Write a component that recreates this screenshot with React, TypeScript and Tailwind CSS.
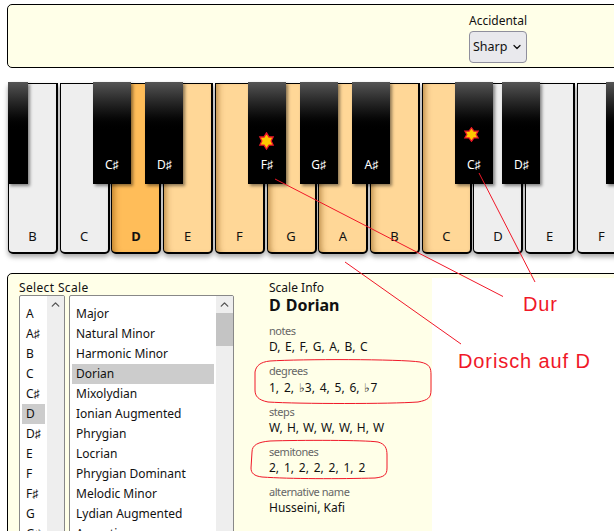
import React from 'react';
import { ChevronDown, ChevronUp } from 'lucide-react';

const whiteKeys = [
  { name: 'B', tone: 'off', black: '-left-[1px] w-[20px]', sharp: '' },
  { name: 'C', tone: 'off', black: 'left-[32px] w-[38px]', sharp: 'C♯' },
  { name: 'D', tone: 'root', black: 'left-[33px] w-[38px]', sharp: 'D♯' },
  { name: 'E', tone: 'on', black: '', sharp: '' },
  { name: 'F', tone: 'on', black: 'left-[32px] w-[38px]', sharp: 'F♯' },
  { name: 'G', tone: 'on', black: 'left-[32px] w-[38px]', sharp: 'G♯' },
  { name: 'A', tone: 'on', black: 'left-[33px] w-[38px]', sharp: 'A♯' },
  { name: 'B', tone: 'on', black: '', sharp: '' },
  { name: 'C', tone: 'on', black: 'left-[32px] w-[38px]', sharp: 'C♯' },
  { name: 'D', tone: 'off', black: 'left-[28px] w-[38px]', sharp: 'D♯' },
  { name: 'E', tone: 'off', black: '', sharp: '' },
  { name: 'F', tone: 'off', black: 'left-[28px] w-[38px]', sharp: '' },
];

const notes = ['A', 'A♯', 'B', 'C', 'C♯', 'D', 'D♯', 'E', 'F', 'F♯', 'G', 'G♯'];
const scales = [
  'Major',
  'Natural Minor',
  'Harmonic Minor',
  'Dorian',
  'Mixolydian',
  'Ionian Augmented',
  'Phrygian',
  'Locrian',
  'Phrygian Dominant',
  'Melodic Minor',
  'Lydian Augmented',
  'Acoustic',
];

const info = [
  { label: 'notes', value: 'D, E, F, G, A, B, C', cls: 'mt-[8px]', spacing: '[word-spacing:1.4px]' },
  { label: 'degrees', value: '1, 2, ♭3, 4, 5, 6, ♭7', cls: 'mt-[8px]', spacing: '[word-spacing:1.7px] pt-[1px]' },
  { label: 'steps', value: 'W, H, W, W, W, H, W', cls: 'mt-[8px]', spacing: '[word-spacing:1px]' },
  { label: 'semitones', value: '2, 1, 2, 2, 2, 1, 2', cls: 'mt-[8px]', spacing: '[word-spacing:1.7px]' },
  { label: 'alternative name', value: 'Husseini, Kafi', cls: 'mt-[8px]', spacing: '' },
];

const Star = ({ size }: { size: string }) => (
  <svg viewBox="0 0 20 20" preserveAspectRatio="none" className={size}>
    <polygon
      points="10,1 12.9,5.5 17.8,5.5 15.5,10 17.8,14.5 12.9,14.5 10,19 7.1,14.5 2.2,14.5 4.5,10 2.2,5.5 7.1,5.5"
      fill="#ffc800"
      stroke="#f01828"
      strokeWidth="1.5"
    />
  </svg>
);

const Key = ({ k, star }: { k: (typeof whiteKeys)[number]; star: string }) => {
  const toneClass =
    k.tone === 'off'
      ? 'bg-[#eeeeee]'
      : k.tone === 'root'
        ? 'bg-[#ffbd59] shadow-[inset_7px_0_6px_-5px_rgba(120,70,0,0.55),0_3px_5px_rgba(0,0,0,0.35)]'
        : 'bg-[#ffd797] shadow-[inset_7px_0_6px_-5px_rgba(120,70,0,0.55),0_3px_5px_rgba(0,0,0,0.35)]';
  return (
    <div
      className={`relative flex h-[171px] w-[50px] shrink-0 items-end justify-center rounded-b-[5px] border-t border-r-2 border-b-2 border-l border-black pb-[7px] text-[13px] leading-[18px] shadow-[0_3px_5px_rgba(0,0,0,0.35)] ${toneClass} ${k.tone === 'root' ? 'font-bold' : ''}`}
    >
      {k.name}
      {k.black && (
        <div
          className={`absolute -top-[2px] z-10 flex h-[102px] flex-col items-center justify-end bg-gradient-to-b from-[#555555] via-[#000000] via-50% to-[#000000] pb-[11px] text-[12px] leading-[16px] font-normal text-white shadow-[2px_2px_3px_rgba(0,0,0,0.45)] ${k.black}`}
        >
          {star === 'large' && (
            <span className="mb-[7px]">
              <Star size="h-[18px] w-[17px]" />
            </span>
          )}
          {star === 'small' && (
            <span className="mb-[15px] -ml-[5px]">
              <Star size="h-[15px] w-[17px]" />
            </span>
          )}
          {k.sharp}
        </div>
      )}
    </div>
  );
};

const ListBox = ({
  items,
  selected,
  width,
  thumb,
}: {
  items: string[];
  selected: string;
  width: string;
  thumb?: boolean;
}) => (
  <div className={`flex h-[300px] shrink-0 overflow-hidden rounded-t-[2px] border border-[#888888] bg-white ${width}`}>
    <div className="min-w-0 flex-1 px-[2px] pt-[8px]">
      {items.map(item => (
        <div
          key={item}
          className={`h-[20px] truncate pl-[4px] leading-[20px] ${item === selected ? 'bg-[#cccccc]' : ''}`}
        >
          {item}
        </div>
      ))}
    </div>
    <div className="w-[17px] shrink-0 bg-[#eeeeee]">
      <div className="flex h-[17px] items-center justify-center text-[#555555]">
        <ChevronUp size={13} strokeWidth={2.5} />
      </div>
      {thumb && <div className="h-[33px] bg-[#c4c4c4]" />}
    </div>
  </div>
);

const App: React.FC = () => {
  return (
    <div className="relative flex h-[531px] w-[614px] flex-col overflow-hidden bg-white pt-[4px] pl-[7px] font-['Noto_Sans',sans-serif] text-[12px] text-[#111111]">
      {/* Options */}
      <div className="h-[64px] w-[640px] shrink-0 rounded-[5px] border border-black bg-[#ffffe8] pt-[7px] pl-[461px]">
        <div className="leading-[18px]">Accidental</div>
        <div className="relative mt-[1px] h-[32px] w-[58px]">
          <select className="h-full w-full appearance-none rounded-[4px] border border-[#8f8f9d] bg-[#e9e9ed] pl-[3px] text-[12.5px] text-[#111111]">
            <option>Sharp</option>
          </select>
          <ChevronDown size={12} strokeWidth={2.5} className="pointer-events-none absolute top-[10px] right-[4px]" />
        </div>
      </div>

      {/* Keyboard */}
      <div className="mt-[15px] ml-[1px] flex h-[171px] w-[640px] shrink-0 gap-[1.72px]">
        {whiteKeys.map((k, i) => (
          <Key key={i} k={k} star={i === 4 ? 'large' : i === 8 ? 'small' : ''} />
        ))}
      </div>

      {/* Scale selection */}
      <div className="mt-[19px] flex h-[300px] w-[640px] shrink-0 rounded-t-[5px] border border-black bg-[#ffffe8] pt-[6px] pl-[11px]">
        <div className="w-[250px] shrink-0">
          <div className="h-[15px] leading-[15px] tracking-[0.35px]">Select Scale</div>
          <div className="flex gap-[4px]">
            <ListBox items={notes} selected="D" width="w-[46px]" />
            <ListBox items={scales} selected="Dorian" width="w-[165px]" thumb />
          </div>
        </div>
        <div className="flex flex-col">
          <div className="h-[16px] leading-[16px]">Scale Info</div>
          <div className="h-[19px] text-[16px] leading-[19px] font-bold [word-spacing:1px]">D Dorian</div>
          {info.map(row => (
            <div key={row.label} className={`${row.cls} h-[32px] ${row.label === 'steps' ? 'translate-y-[1px]' : ''} ${row.label === 'semitones' || row.label === 'alternative name' ? 'translate-y-[1px]' : ''}`}>
              <div className="h-[16px] text-[11px] leading-[16px] tracking-[-0.45px] text-[#666666]">{row.label}</div>
              <div className={`h-[16px] leading-[16px] ${row.spacing}`}>{row.value}</div>
            </div>
          ))}
        </div>
      </div>

      {/* Pasted-over white area and hand annotations */}
      <div className="absolute top-[278px] left-[432px] h-[253px] w-[182px] bg-white" />
      <svg className="pointer-events-none absolute inset-0 z-20" width="614" height="531" fill="none" stroke="#f01828" strokeWidth="1">
        <path d="M275 179 L503 296.5" />
        <path d="M479 173 L535 282" />
        <path d="M345 262 L461 344" />
        <path d="M270 361 C300 359 400 359 420 362 C430 364 431 368 431 375 L431 390 C431 398 428 400 418 402 C390 404 300 404 268 402 C258 400 255 396 255 390 L255 372 C256 366 260 362 270 361 Z" />
        <path d="M270 441 C300 440 365 440 378 442 C385 444 387 448 387 455 L387 468 C387 475 384 477 375 478 C340 479 290 479 262 477 C254 476 251 473 251 468 L252 452 C252 445 258 442 270 441 Z" />
      </svg>
      <div className="absolute top-[293px] left-[523px] z-20 text-[20px] leading-[22px] tracking-[0.9px] font-['Liberation_Sans',sans-serif] text-[#f01828]">Dur</div>
      <div className="absolute top-[350px] left-[458px] z-20 text-[20px] leading-[22px] tracking-[0.9px] font-['Liberation_Sans',sans-serif] text-[#f01828]">Dorisch auf D</div>
    </div>
  );
};

export default App;
